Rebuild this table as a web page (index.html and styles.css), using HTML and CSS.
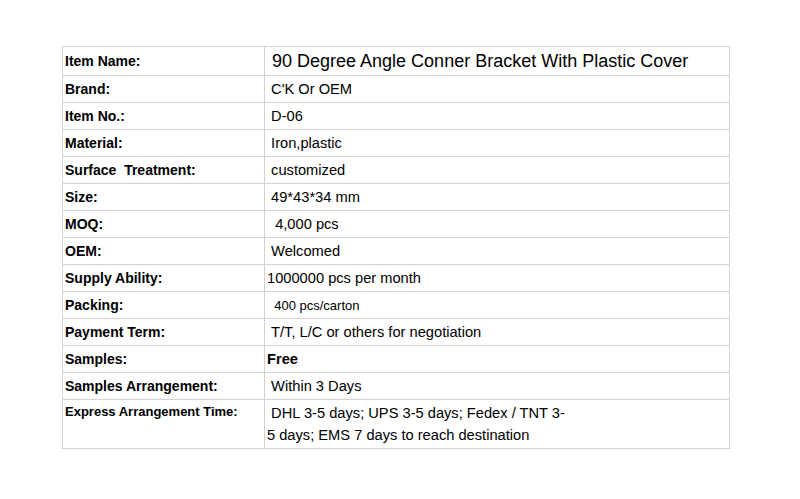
FILE: index.html
```html
<!DOCTYPE html>
<html>
<head>
<meta charset="utf-8">
<link rel="stylesheet" href="styles.css">
</head>
<body>
<div class="page">
<table class="spec">
  <tr class="first"><td class="label">Item Name:</td><td class="value big">&nbsp;90 Degree Angle Conner Bracket With Plastic Cover</td></tr>
  <tr><td class="label">Brand:</td><td class="value">&nbsp;C'K Or OEM</td></tr>
  <tr><td class="label">Item No.:</td><td class="value">&nbsp;D-06</td></tr>
  <tr><td class="label">Material:</td><td class="value">&nbsp;Iron,plastic</td></tr>
  <tr><td class="label">Surface&nbsp; Treatment:</td><td class="value">&nbsp;customized</td></tr>
  <tr><td class="label">Size:</td><td class="value">&nbsp;49*43*34 mm</td></tr>
  <tr><td class="label">MOQ:</td><td class="value">&nbsp;&nbsp;4,000 pcs</td></tr>
  <tr><td class="label">OEM:</td><td class="value">&nbsp;Welcomed</td></tr>
  <tr><td class="label">Supply Ability:</td><td class="value">1000000 pcs per month</td></tr>
  <tr><td class="label">Packing:</td><td class="value small">&nbsp;&nbsp;400 pcs/carton</td></tr>
  <tr><td class="label">Payment Term:</td><td class="value">&nbsp;T/T, L/C or others for negotiation</td></tr>
  <tr><td class="label">Samples:</td><td class="value strong">Free</td></tr>
  <tr><td class="label">Samples Arrangement:</td><td class="value">&nbsp;Within 3 Days</td></tr>
  <tr class="last"><td class="label label-sm">Express Arrangement Time:</td><td class="value multi">&nbsp;DHL 3-5 days; UPS 3-5 days; Fedex / TNT 3-<br>5 days; EMS 7 days to reach destination</td></tr>
</table>
</div>
</body>
</html>
```
FILE: styles.css
```css
html, body {
  margin: 0;
  padding: 0;
  background: #ffffff;
}
body {
  font-family: "Liberation Sans", Arial, sans-serif;
  color: #000000;
}
.page {
  padding: 46px 0 0 62px;
}
.spec {
  border-collapse: collapse;
  width: 668px;
  table-layout: fixed;
}
.spec td {
  border: 1px solid #d2d2d2;
  height: 26px;
  padding: 0 2px;
  vertical-align: middle;
  white-space: nowrap;
  box-sizing: border-box;
  height: 27px;
}
.spec tr.first td {
  height: 29px;
}
.spec td.label {
  width: 202px;
  font-weight: bold;
  font-size: 14px;
  padding-left: 2px;
}
.spec td.label-sm {
  font-size: 13px;
  vertical-align: top;
  padding-top: 4px;
}
.spec td.value {
  font-size: 14.67px;
}
.spec td.big {
  font-size: 18px;
}
.spec td.small {
  font-size: 13px;
}
.spec td.strong {
  font-weight: bold;
}
.spec td.multi {
  line-height: 22px;
  height: 49px;
  padding-top: 2px;
  padding-bottom: 2px;
}
```
